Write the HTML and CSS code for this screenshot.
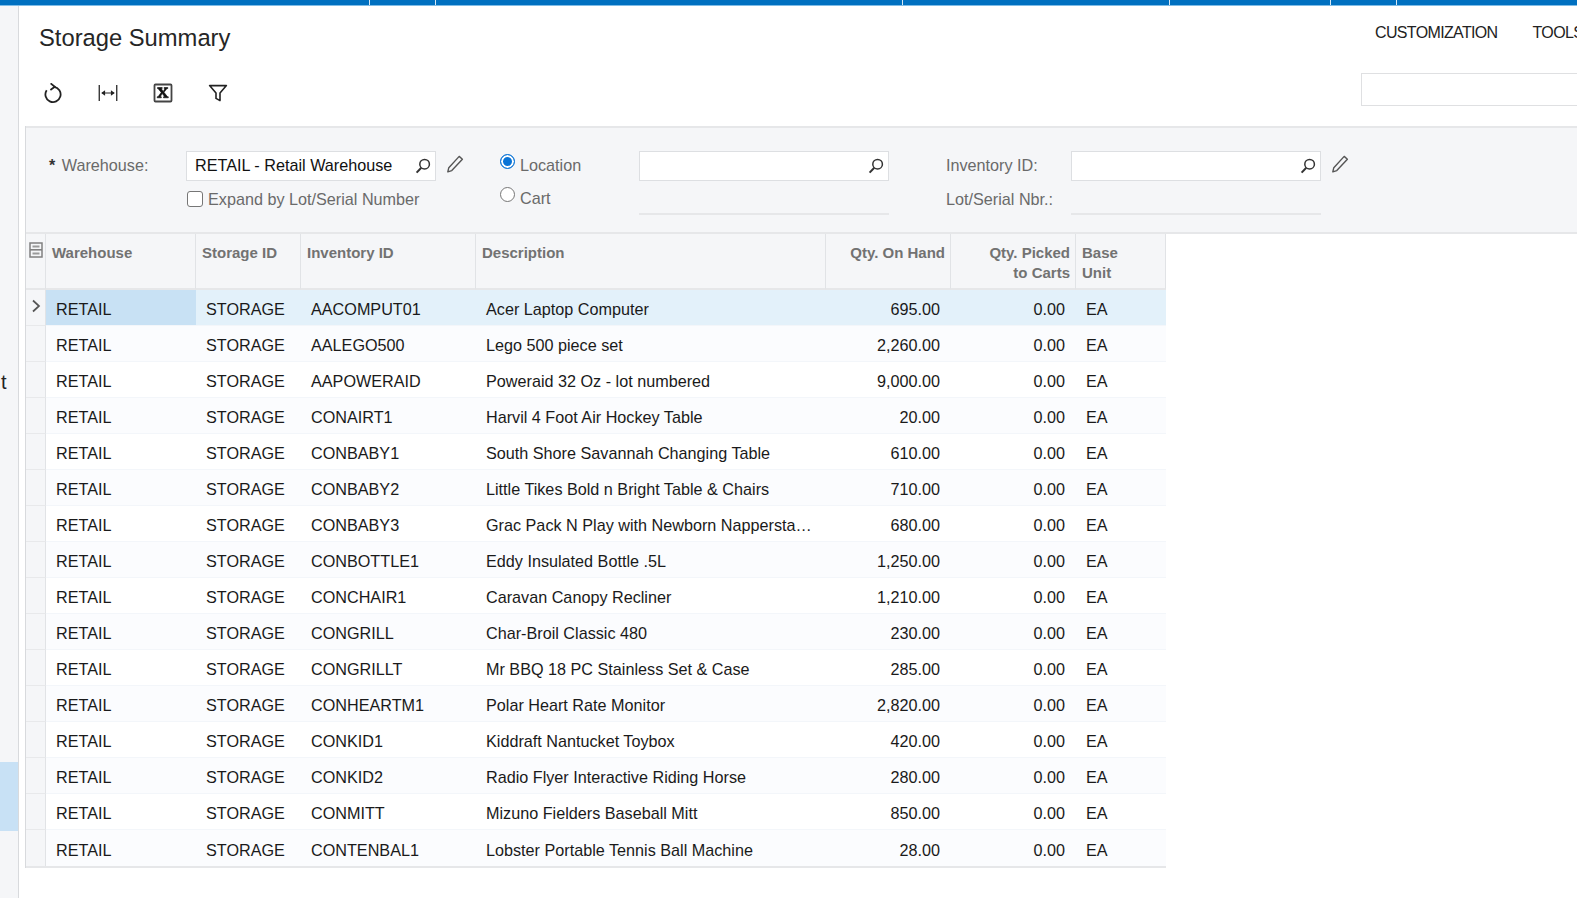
FILE: index.html
```html
<!DOCTYPE html>
<html lang="en">
<head>
<meta charset="utf-8">
<title>Storage Summary</title>
<link rel="stylesheet" href="styles.css">
</head>
<body>
<div class="topbar">
  <div class="seg s1"></div><div class="seg s2"></div><div class="seg s3"></div><div class="seg s4"></div><div class="seg s5"></div><div class="seg s6"></div><div class="seg s7"></div>
</div>
<div class="layout">
  <aside class="rail">
    <div class="rail-t">t</div>
    <div class="rail-sel"></div>
  </aside>
  <main class="content">
    <header class="head">
      <h1 class="title">Storage Summary</h1>
      <nav class="menu"><span>CUSTOMIZATION</span><span>TOOLS</span></nav>
    </header>
    <div class="toolbar">
      <div class="tools">
        <button class="tool"><svg width="20" height="20" viewBox="0 0 20 20"><path d="M11 3.9A7.6 7.6 0 1 1 3.7 7.2" fill="none" stroke="#222" stroke-width="1.8"/><path d="M7.6 0.4 11.8 3.8 7.4 7" fill="none" stroke="#222" stroke-width="1.8"/></svg></button>
        <button class="tool"><svg width="24" height="20" viewBox="0 0 24 20"><path d="M1.5 0.5v19M22.5 0.5v19" stroke="#222" stroke-width="1.5"/><path d="M5 10h14" stroke="#222" stroke-width="1.2"/><path d="M8.5 6.8 3.8 10l4.7 3.2zM15.5 6.8 20.2 10l-4.7 3.2z" fill="#222"/></svg></button>
        <button class="tool"><svg width="20" height="20" viewBox="0 0 20 20"><rect x="1.5" y="1.5" width="17" height="17" rx="1" fill="none" stroke="#444" stroke-width="1.8"/><path d="M4.5 4.5h4.7v1l-.8.3 1.8 2.6 1.7-2.6-.8-.3v-1h3.7v1l-1 .2-2.8 3.6 3.3 4.3 1 .2v1h-4.8v-1l1-.2-2.2-3-2 3 1 .2v1H4.2v-1l1-.2 3-4.2-3-3.7-.7-.2z" fill="#111" stroke="#111" stroke-width=".6"/></svg></button>
        <button class="tool"><svg width="20" height="20" viewBox="0 0 20 20"><path d="M1.6 2.6h16.8l-6.4 7.4v7.6l-4-2.2V10z" fill="none" stroke="#222" stroke-width="1.6" stroke-linejoin="round"/></svg></button>
      </div>
      <div class="search-box"></div>
    </div>
    <section class="panel">
      <form class="filters">
        <div class="f-col f-wh">
          <div class="f-row">
            <label class="f-label lbl-wh"><span class="req">*</span> Warehouse:</label>
            <div class="input wide"><span class="val">RETAIL - Retail Warehouse</span><svg class="mag" width="16" height="16" viewBox="0 0 16 16"><circle cx="9.6" cy="6.2" r="4.8" fill="none" stroke="#333" stroke-width="1.5"/><path d="M6.3 9.8 1.6 14.6" stroke="#333" stroke-width="2"/></svg></div>
            <svg class="pen" width="18" height="18" viewBox="0 0 18 18"><path d="M13.2 1.4l3.2 2.8L5.8 15.6l-4 1.2 1-4.1z" fill="none" stroke="#555" stroke-width="1.4" stroke-linejoin="round"/></svg>
          </div>
          <div class="f-row f-check">
            <span class="check"></span><span class="muted">Expand by Lot/Serial Number</span>
          </div>
        </div>
        <div class="f-col f-radio">
          <div class="f-row"><span class="radio on"></span><span class="muted">Location</span></div>
          <div class="f-row"><span class="radio"></span><span class="muted">Cart</span></div>
        </div>
        <div class="f-col f-loc">
          <div class="f-row"><div class="input wide"><svg class="mag" width="16" height="16" viewBox="0 0 16 16"><circle cx="9.6" cy="6.2" r="4.8" fill="none" stroke="#333" stroke-width="1.5"/><path d="M6.3 9.8 1.6 14.6" stroke="#333" stroke-width="2"/></svg></div></div>
          <div class="f-row"><div class="underline"></div></div>
        </div>
        <div class="f-col f-inv">
          <div class="f-row">
            <label class="f-label lbl-inv">Inventory ID:</label>
            <div class="input"><svg class="mag" width="16" height="16" viewBox="0 0 16 16"><circle cx="9.6" cy="6.2" r="4.8" fill="none" stroke="#333" stroke-width="1.5"/><path d="M6.3 9.8 1.6 14.6" stroke="#333" stroke-width="2"/></svg></div>
            <svg class="pen" width="18" height="18" viewBox="0 0 18 18"><path d="M13.2 1.4l3.2 2.8L5.8 15.6l-4 1.2 1-4.1z" fill="none" stroke="#555" stroke-width="1.4" stroke-linejoin="round"/></svg>
          </div>
          <div class="f-row">
            <label class="f-label lbl-inv">Lot/Serial Nbr.:</label>
            <div class="underline"></div>
          </div>
        </div>
      </form>
      <table class="grid">
        <colgroup><col class="c0"><col class="c1"><col class="c2"><col class="c3"><col class="c4"><col class="c5"><col class="c6"><col class="c7"></colgroup>
        <thead>
          <tr>
            <th class="ind"><svg width="14" height="16" viewBox="0 0 14 16"><rect x="1" y="1" width="12" height="14" fill="none" stroke="#808080" stroke-width="1.5"/><path d="M1 7.8h12" stroke="#808080" stroke-width="1.6"/><path d="M3.5 4.4h7M3.5 11.4h7" stroke="#9a9a9a" stroke-width="2"/></svg></th>
            <th>Warehouse</th><th>Storage ID</th><th>Inventory ID</th><th>Description</th>
            <th class="r">Qty. On Hand</th><th class="r">Qty. Picked<br>to Carts</th><th>Base<br>Unit</th>
          </tr>
        </thead>
        <tbody>
          <tr class="sel"><td class="ind"><svg width="10" height="14" viewBox="0 0 10 14"><path d="M2 1.5 8 7 2 12.5" fill="none" stroke="#555" stroke-width="1.7"/></svg></td><td class="cur">RETAIL</td><td>STORAGE</td><td>AACOMPUT01</td><td>Acer Laptop Computer</td><td class="r">695.00</td><td class="r">0.00</td><td class="u">EA</td></tr>
          <tr><td class="ind"></td><td>RETAIL</td><td>STORAGE</td><td>AALEGO500</td><td>Lego 500 piece set</td><td class="r">2,260.00</td><td class="r">0.00</td><td class="u">EA</td></tr>
          <tr><td class="ind"></td><td>RETAIL</td><td>STORAGE</td><td>AAPOWERAID</td><td>Poweraid 32 Oz - lot numbered</td><td class="r">9,000.00</td><td class="r">0.00</td><td class="u">EA</td></tr>
          <tr><td class="ind"></td><td>RETAIL</td><td>STORAGE</td><td>CONAIRT1</td><td>Harvil 4 Foot Air Hockey Table</td><td class="r">20.00</td><td class="r">0.00</td><td class="u">EA</td></tr>
          <tr><td class="ind"></td><td>RETAIL</td><td>STORAGE</td><td>CONBABY1</td><td>South Shore Savannah Changing Table</td><td class="r">610.00</td><td class="r">0.00</td><td class="u">EA</td></tr>
          <tr><td class="ind"></td><td>RETAIL</td><td>STORAGE</td><td>CONBABY2</td><td>Little Tikes Bold n Bright Table &amp; Chairs</td><td class="r">710.00</td><td class="r">0.00</td><td class="u">EA</td></tr>
          <tr><td class="ind"></td><td>RETAIL</td><td>STORAGE</td><td>CONBABY3</td><td class="clip">Grac Pack N Play with Newborn Napperstation</td><td class="r">680.00</td><td class="r">0.00</td><td class="u">EA</td></tr>
          <tr><td class="ind"></td><td>RETAIL</td><td>STORAGE</td><td>CONBOTTLE1</td><td>Eddy Insulated Bottle .5L</td><td class="r">1,250.00</td><td class="r">0.00</td><td class="u">EA</td></tr>
          <tr><td class="ind"></td><td>RETAIL</td><td>STORAGE</td><td>CONCHAIR1</td><td>Caravan Canopy Recliner</td><td class="r">1,210.00</td><td class="r">0.00</td><td class="u">EA</td></tr>
          <tr><td class="ind"></td><td>RETAIL</td><td>STORAGE</td><td>CONGRILL</td><td>Char-Broil Classic 480</td><td class="r">230.00</td><td class="r">0.00</td><td class="u">EA</td></tr>
          <tr><td class="ind"></td><td>RETAIL</td><td>STORAGE</td><td>CONGRILLT</td><td>Mr BBQ 18 PC Stainless Set &amp; Case</td><td class="r">285.00</td><td class="r">0.00</td><td class="u">EA</td></tr>
          <tr><td class="ind"></td><td>RETAIL</td><td>STORAGE</td><td>CONHEARTM1</td><td>Polar Heart Rate Monitor</td><td class="r">2,820.00</td><td class="r">0.00</td><td class="u">EA</td></tr>
          <tr><td class="ind"></td><td>RETAIL</td><td>STORAGE</td><td>CONKID1</td><td>Kiddraft Nantucket Toybox</td><td class="r">420.00</td><td class="r">0.00</td><td class="u">EA</td></tr>
          <tr><td class="ind"></td><td>RETAIL</td><td>STORAGE</td><td>CONKID2</td><td>Radio Flyer Interactive Riding Horse</td><td class="r">280.00</td><td class="r">0.00</td><td class="u">EA</td></tr>
          <tr><td class="ind"></td><td>RETAIL</td><td>STORAGE</td><td>CONMITT</td><td>Mizuno Fielders Baseball Mitt</td><td class="r">850.00</td><td class="r">0.00</td><td class="u">EA</td></tr>
          <tr><td class="ind"></td><td>RETAIL</td><td>STORAGE</td><td>CONTENBAL1</td><td>Lobster Portable Tennis Ball Machine</td><td class="r">28.00</td><td class="r">0.00</td><td class="u">EA</td></tr>
        </tbody>
      </table>
    </section>
  </main>
</div>
</body>
</html>
```

FILE: styles.css
```css
* { box-sizing: border-box; }
html, body { margin: 0; height: 100%; }
body {
  width: 1577px;
  height: 898px;
  overflow: hidden;
  background: #fff;
  color: #1a1a1a;
  font-family: "Liberation Sans", Arial, sans-serif;
  font-size: 16.2px;
}
.topbar { display: flex; height: 6px; background: #0070c0; border-bottom: 1px solid #7fbce6; }
.seg { height: 5px; border-right: 1px solid #d8e8f4; }
.s1 { width: 370px; }
.s2 { width: 66px; }
.s3 { width: 467px; }
.s4 { width: 267px; }
.s5 { width: 161px; }
.s6 { width: 66px; }
.s7 { flex: 1; border-right: 0; }

.layout { display: flex; height: 892px; }
.rail {
  width: 19px;
  flex: none;
  background: #f5f6f8;
  border-right: 1px solid #d8dadd;
  padding-top: 366px;
}
.rail-t { height: 390px; padding-left: 1px; font-size: 20px; line-height: 20px; color: #222; }
.rail-sel { height: 69px; background: #c8e1f5; }

.content { flex: 1; min-width: 0; padding-left: 6px; overflow: hidden; }
.head { display: flex; justify-content: space-between; height: 64px; }
.title { margin: 18px 0 0 14px; font-size: 23.75px; line-height: 28px; font-weight: 400; color: #262626; }
.menu { display: flex; gap: 35px; margin-top: 17px; width: 226px; flex: none; margin-right: -24px; font-size: 16px; letter-spacing: -0.65px; line-height: 20px; color: #222; white-space: nowrap; }

.toolbar { display: flex; justify-content: space-between; height: 56px; }
.tools { display: flex; gap: 35px; padding: 13px 0 0 18px; }
.tool { width: 20px; height: 20px; padding: 0; border: 0; background: none; display: flex; justify-content: center; }
.search-box { width: 232px; height: 33px; margin: 3px -16px 0 0; flex: none; background: #fff; border: 1px solid #dfe0e2; border-right: 0; }

.panel { border-left: 1px solid #d8dadd; width: 1552px; }
.filters {
  display: flex;
  height: 108px;
  padding-top: 23px;
  background: #f5f6f8;
  border-top: 2px solid #e6e7e9;
  border-bottom: 2px solid #e6e7e9;
  color: #6a6a6a;
}
.f-col { display: flex; flex-direction: column; gap: 4px; }
.f-row { display: flex; align-items: center; height: 30px; }
.f-wh { width: 474px; padding-left: 23px; }
.f-label, .val, .muted { margin-top: -2px; }
.lbl-wh { width: 137px; white-space: nowrap; }
.req { font-size: 16px; font-weight: 700; color: #333; margin-right: 2px; }
.input { position: relative; display: flex; align-items: center; flex: none; width: 250px; height: 30px; padding-left: 8px; background: #fff; border: 1px solid #dddfe2; color: #111; }
.mag { position: absolute; right: 4px; top: 6px; }
.pen { margin: -4px 0 0 10px; flex: none; }
.f-check { padding-left: 138px; }
.check { width: 16px; height: 16px; margin: -2px 5px 0 0; flex: none; background: #fff; border: 1px solid #767676; border-radius: 3px; }
.muted { color: #6a6a6a; }
.f-radio { width: 139px; }
.f-radio .f-row + .f-row { margin-top: -2px; }
.f-radio .f-row + .f-row .muted { margin-top: 0; }
.radio { width: 15px; height: 15px; margin: -8px 5px 0 0; flex: none; background: #fff; border: 1px solid #767676; border-radius: 50%; }
.radio.on { margin-top: -9px; border-color: #0a74d6; box-shadow: inset 0 0 0 2px #fff; background: #0a74d6; }
.f-loc { width: 307px; }
.underline { width: 250px; height: 30px; border-bottom: 2px solid #e6e7e9; flex: none; }
.lbl-inv { width: 125px; white-space: nowrap; }

.grid { table-layout: fixed; width: 1140px; border-collapse: separate; border-spacing: 0; border-bottom: 2px solid #e6e7e9; }
.c0 { width: 20px; }
.c1 { width: 150px; }
.c2 { width: 105px; }
.c3 { width: 175px; }
.c4 { width: 350px; }
.c5 { width: 125px; }
.c6 { width: 125px; }
.c7 { width: 90px; }
th {
  height: 56px;
  padding: 9px 5px 0 6px;
  vertical-align: top;
  text-align: left;
  background: #f5f6f8;
  border-right: 1px solid #e1e3e6;
  border-bottom: 2px solid #e6e7e9;
  color: #727272;
  font-size: 15px;
  font-weight: 700;
  line-height: 20px;
  white-space: nowrap;
}
th.ind { padding: 8px 0 0 3px; }
td {
  height: 36px;
  padding: 4px 10px 0;
  background: #fff;
  border-bottom: 1px solid #f3f6fa;
  color: #1a1a1a;
  white-space: nowrap;
  overflow: hidden;
}
tbody tr:nth-child(even) td { background: #fbfcfe; }
th.r { text-align: right; }
td.r { text-align: right; padding-right: 11px; }
td.ind { padding: 0 0 1px 5px; background: #f5f6f8 !important; border-bottom: 1px solid #e8e9eb; border-right: 1px solid #e1e3e6; }
tr.sel td { background: #e3f1fa; }
tr.sel td.cur { background: #c8e1f4; }
td.clip { text-overflow: ellipsis; padding-right: 14px; }
tbody tr:last-child td { border-bottom: 0; }
```
